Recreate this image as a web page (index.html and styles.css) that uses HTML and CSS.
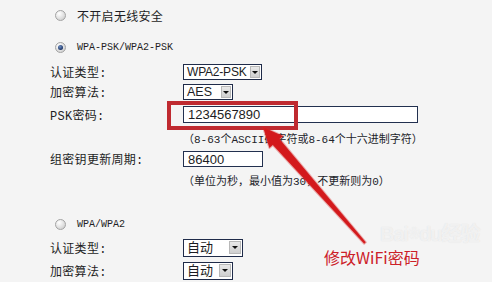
FILE: index.html
```html
<!DOCTYPE html>
<html lang="zh-CN">
<head>
    <meta charset="UTF-8">
    <title>无线安全设置</title>
    <link rel="stylesheet" href="styles.css">
</head>
<body>
    <div class="page">
        <div class="radio-row">
            <span class="radio"></span>
            <span class="radio-text cjk">不开启无线安全</span>
        </div>

        <div class="radio-row radio-row-gap">
            <span class="radio radio-checked"></span>
            <span class="radio-text">WPA-PSK/WPA2-PSK</span>
        </div>

        <div class="fields">
            <div class="field">
                <span class="field-label">认证类型:</span>
                <span class="select select-wide">
                    <span class="select-value select-value-tight">WPA2-PSK</span>
                    <span class="select-button"></span>
                </span>
            </div>
            <div class="field">
                <span class="field-label">加密算法:</span>
                <span class="select select-narrow">
                    <span class="select-value">AES</span>
                    <span class="select-button"></span>
                </span>
            </div>
            <div class="field field-tall">
                <span class="field-label">PSK密码:</span>
                <span class="text-input input-long">1234567890</span>
            </div>
            <div class="field field-hint">
                <span class="field-label"></span>
                <span class="hint">（8-63个ASCII码字符或8-64个十六进制字符）</span>
            </div>
            <div class="field">
                <span class="field-label">组密钥更新周期:</span>
                <span class="text-input input-short">86400</span>
            </div>
            <div class="field field-hint">
                <span class="field-label"></span>
                <span class="hint">（单位为秒，最小值为30，不更新则为0）</span>
            </div>
        </div>

        <div class="radio-row radio-row-section">
            <span class="radio"></span>
            <span class="radio-text">WPA/WPA2</span>
        </div>

        <div class="fields fields-second">
            <div class="field field-auto">
                <span class="field-label">认证类型:</span>
                <span class="select select-auto">
                    <span class="select-value cjk">自动</span>
                    <span class="select-button"></span>
                </span>
            </div>
            <div class="field field-auto">
                <span class="field-label">加密算法:</span>
                <span class="select select-auto-narrow">
                    <span class="select-value cjk">自动</span>
                    <span class="select-button"></span>
                </span>
            </div>
        </div>
    </div>

    <!-- annotation drawn over the screenshot -->
    <div class="mark-box"></div>
    <svg class="mark-arrow" width="492" height="282" viewBox="0 0 492 282">
        <polygon points="263,127 283,136.1 279.6,139 365.8,242.3 364.2,243.7 272.8,145 269.4,147.9"
                 fill="#d3191c" stroke="rgba(214,40,40,0.35)" stroke-width="2" stroke-linejoin="round"/>
    </svg>
    <div class="watermark">Bai<span class="paw">❀</span>du经验</div>
    <div class="mark-text">修改WiFi密码</div>
</body>
</html>
```

FILE: styles.css
```css
* {
    margin: 0;
    padding: 0;
    box-sizing: border-box;
}

body {
    width: 492px;
    height: 282px;
    overflow: hidden;
    position: relative;
    background-color: #f4f4f4;
    color: #1e1e24;
    font-family: "Liberation Mono", "Noto Sans CJK SC", monospace;
    font-size: 12px;
}

.page {
    padding: 8px 0 0 50px;
}

.cjk {
    font-family: "Noto Sans CJK SC", sans-serif;
}

.radio-row {
    display: flex;
    align-items: center;
    gap: 11px;
    height: 14px;
    padding-left: 5px;
}

.radio-row-gap {
    margin-top: 18px;
}

.radio-row-section {
    margin-top: 26px;
}

.radio {
    width: 11px;
    height: 11px;
    border-radius: 50%;
    border: 1px solid #a3a3a3;
    background: radial-gradient(circle at 35% 30%, #ffffff 0%, #e6e6e6 45%, #c4c4c4 100%);
    display: flex;
    align-items: center;
    justify-content: center;
}

.radio-checked::after {
    content: "";
    width: 5px;
    height: 5px;
    border-radius: 50%;
    background: radial-gradient(circle at 40% 35%, #6e8fc4 0%, #1d3566 70%);
}

.radio-text {
    font-size: 10px;
}

.radio-text.cjk {
    font-size: 12px;
    letter-spacing: 0.3px;
}

.fields {
    margin-top: 8px;
}

.fields-second {
    margin-top: 5px;
}

.field {
    display: flex;
    align-items: center;
    height: 20px;
}

.field-tall {
    height: 25px;
}

.field-hint {
    height: 22px;
}

.field-auto {
    height: 23px;
}

.field-label {
    width: 133px;
    flex-shrink: 0;
    letter-spacing: 0.3px;
}

.hint {
    font-size: 11px;
    color: #22232a;
    white-space: nowrap;
}

.select {
    display: flex;
    align-items: center;
    justify-content: space-between;
    height: 16px;
    border: 1px solid #1f2b49;
    background-color: white;
    padding: 0 1px 0 3px;
}

.select-wide {
    width: 79px;
}

.select-narrow {
    width: 50px;
}

.select-auto {
    width: 60px;
    height: 18px;
}

.select-auto-narrow {
    width: 50px;
    height: 18px;
}

.select-value {
    font-family: "Liberation Sans", "Noto Sans CJK SC", sans-serif;
    font-size: 12.5px;
    color: #1c1c22;
    line-height: 1;
    white-space: nowrap;
}

.select-value-tight {
    font-size: 12px;
    letter-spacing: -0.2px;
}

.select-value.cjk {
    font-size: 13px;
}

.select-button {
    width: 10px;
    height: 12px;
    flex-shrink: 0;
    background: linear-gradient(#e9e9e9, #cfcfcf);
    border: 1px solid #b8b8b8;
    display: flex;
    align-items: center;
    justify-content: center;
}

.select-auto .select-button,
.select-auto-narrow .select-button {
    width: 12px;
    height: 13px;
}

.select-button::after {
    content: "";
    border-left: 3px solid transparent;
    border-right: 3px solid transparent;
    border-top: 3px solid #111;
}

.text-input {
    display: flex;
    align-items: center;
    background-color: white;
    border: 1px solid #22304f;
    padding-left: 4px;
    font-family: "Liberation Sans", sans-serif;
    font-size: 13px;
    color: #1c1c22;
}

.input-long {
    width: 235px;
    height: 17px;
}

.input-short {
    width: 80px;
    height: 16px;
}

.mark-box {
    position: absolute;
    left: 167px;
    top: 101px;
    width: 131px;
    height: 29px;
    border: 4px solid #bf2a30;
}

.mark-arrow {
    position: absolute;
    left: 0;
    top: 0;
    pointer-events: none;
}

.watermark {
    position: absolute;
    left: 380px;
    top: 222px;
    white-space: nowrap;
    font-family: "Liberation Sans", "Noto Sans CJK SC", sans-serif;
    font-size: 20px;
    line-height: 24px;
    font-weight: bold;
    color: rgba(255, 255, 255, 0.6);
    text-shadow: 0 0 1px rgba(160, 160, 160, 0.3);
    letter-spacing: -1px;
}

.paw {
    font-size: 12px;
    vertical-align: top;
}

.mark-text {
    position: absolute;
    left: 324px;
    top: 248px;
    white-space: nowrap;
    font-family: "Noto Sans CJK SC", sans-serif;
    font-size: 16px;
    color: #cc2028;
    line-height: 1.2;
}
```
